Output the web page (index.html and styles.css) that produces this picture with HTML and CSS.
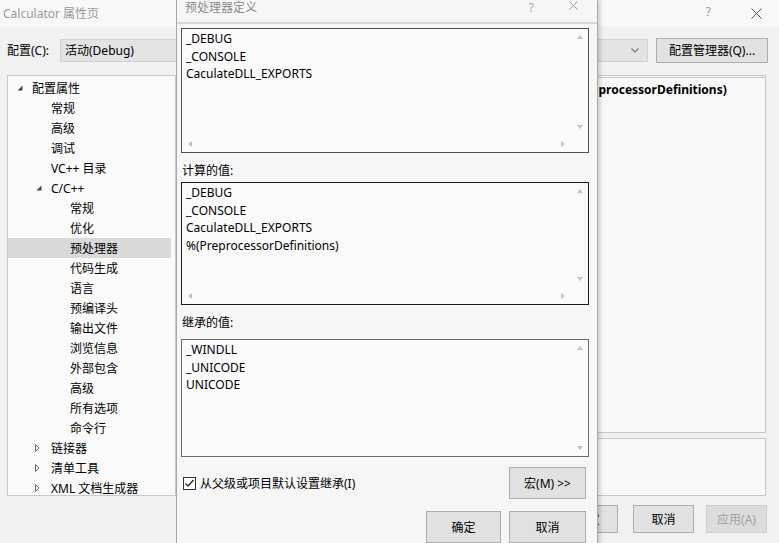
FILE: index.html
```html
<!DOCTYPE html>
<html lang="zh-CN">
<head>
<meta charset="utf-8">
<title>Calculator 属性页</title>
<link rel="stylesheet" href="styles.css">
</head>
<body>
<div class="win">
  <div class="win-title">
    <span class="win-title-text">Calculator 属性页</span>
    <span class="win-help">?</span>
    <svg class="win-close" width="11" height="11" viewBox="0 0 11 11"><path d="M0.5 0.5L10.5 10.5M10.5 0.5L0.5 10.5" stroke="#555" stroke-width="1" fill="none"/></svg>
  </div>
  <div class="cfg-row">
    <span class="cfg-label">配置(C):</span>
    <div class="combo combo-cfg"><span>活动(Debug)</span></div>
    <span class="cfg-label plat-label">平台(P):</span>
    <div class="combo combo-plat"><span>活动(Win32)</span>
      <svg class="combo-arrow" width="8" height="5" viewBox="0 0 8 5"><path d="M0.5 0.5L4 4L7.5 0.5" stroke="#777" stroke-width="1.2" fill="none"/></svg>
    </div>
    <div class="btn cfg-mgr">配置管理器(Q)...</div>
  </div>
  <div class="main">
    <div class="tree">
      <div class="node l0"><svg class="tw" width="12" height="12" viewBox="0 0 12 12"><path d="M8.5 3.5V8.5H3.5Z" fill="#444"/></svg><span>配置属性</span></div>
      <div class="node l1"><span class="tw-sp"></span><span>常规</span></div>
      <div class="node l1"><span class="tw-sp"></span><span>高级</span></div>
      <div class="node l1"><span class="tw-sp"></span><span>调试</span></div>
      <div class="node l1"><span class="tw-sp"></span><span>VC++ 目录</span></div>
      <div class="node l1"><svg class="tw" width="12" height="12" viewBox="0 0 12 12"><path d="M8.5 3.5V8.5H3.5Z" fill="#444"/></svg><span>C/C++</span></div>
      <div class="node l2"><span class="tw-sp"></span><span>常规</span></div>
      <div class="node l2"><span class="tw-sp"></span><span>优化</span></div>
      <div class="node l2 sel"><span class="tw-sp"></span><span>预处理器</span></div>
      <div class="node l2"><span class="tw-sp"></span><span>代码生成</span></div>
      <div class="node l2"><span class="tw-sp"></span><span>语言</span></div>
      <div class="node l2"><span class="tw-sp"></span><span>预编译头</span></div>
      <div class="node l2"><span class="tw-sp"></span><span>输出文件</span></div>
      <div class="node l2"><span class="tw-sp"></span><span>浏览信息</span></div>
      <div class="node l2"><span class="tw-sp"></span><span>外部包含</span></div>
      <div class="node l2"><span class="tw-sp"></span><span>高级</span></div>
      <div class="node l2"><span class="tw-sp"></span><span>所有选项</span></div>
      <div class="node l2"><span class="tw-sp"></span><span>命令行</span></div>
      <div class="node l1 c"><svg class="tw" width="12" height="12" viewBox="0 0 12 12"><path d="M4.5 2.5L8 6L4.5 9.5Z" fill="none" stroke="#666" stroke-width="1"/></svg><span>链接器</span></div>
      <div class="node l1 c"><svg class="tw" width="12" height="12" viewBox="0 0 12 12"><path d="M4.5 2.5L8 6L4.5 9.5Z" fill="none" stroke="#666" stroke-width="1"/></svg><span>清单工具</span></div>
      <div class="node l1 c"><svg class="tw" width="12" height="12" viewBox="0 0 12 12"><path d="M4.5 2.5L8 6L4.5 9.5Z" fill="none" stroke="#666" stroke-width="1"/></svg><span>XML 文档生成器</span></div>
    </div>
    <div class="props">
      <div class="grid">
        <div class="prop-row">
          <span class="prop-name">预处理器定义</span>
          <span class="prop-val">_DEBUG;_CONSOLE;CaculateDLL_EXPORTS;%(PreprocessorDefinitions)</span>
        </div>
      </div>
      <div class="desc"></div>
    </div>
  </div>
  <div class="footer">
    <div class="btn fbtn ok">确定</div>
    <div class="btn fbtn">取消</div>
    <div class="btn fbtn disabled">应用(A)</div>
  </div>
</div>

<div class="dlg">
  <div class="dlg-title">
    <span class="dlg-title-text">预处理器定义</span>
    <span class="dlg-help">?</span>
    <svg class="dlg-close" width="9" height="9" viewBox="0 0 9 9"><path d="M0.5 0.5L8.5 8.5M8.5 0.5L0.5 8.5" stroke="#999" stroke-width="1" fill="none"/></svg>
  </div>
  <div class="dlg-body">
    <div class="box box-edit hs">
      <div class="box-text">
        <div>_DEBUG</div>
        <div>_CONSOLE</div>
        <div>CaculateDLL_EXPORTS</div>
      </div>
      <div class="vbar"><i class="ar up"></i><i class="ar down"></i></div>
      <div class="hbar"><i class="ar left"></i><i class="ar right"></i></div>
      <div class="corner"></div>
    </div>
    <div class="lbl lbl-calc">计算的值:</div>
    <div class="box box-calc hs">
      <div class="box-text">
        <div>_DEBUG</div>
        <div>_CONSOLE</div>
        <div>CaculateDLL_EXPORTS</div>
        <div>%(PreprocessorDefinitions)</div>
      </div>
      <div class="vbar"><i class="ar up"></i><i class="ar down"></i></div>
      <div class="hbar"><i class="ar left"></i><i class="ar right"></i></div>
      <div class="corner"></div>
    </div>
    <div class="lbl lbl-inh">继承的值:</div>
    <div class="box box-inh">
      <div class="box-text">
        <div>_WINDLL</div>
        <div>_UNICODE</div>
        <div>UNICODE</div>
      </div>
      <div class="vbar"><i class="ar up"></i><i class="ar down"></i></div>
    </div>
    <div class="opt-row">
      <label class="chk">
        <svg class="chk-box" width="13" height="13" viewBox="0 0 13 13"><rect x="0.5" y="0.5" width="12" height="12" fill="#fff" stroke="#333"/><path d="M2.5 6.5L5 9L10.5 3" stroke="#222" stroke-width="1.3" fill="none"/></svg>
        <span>从父级或项目默认设置继承(I)</span>
      </label>
      <div class="btn dbtn">宏(M) &gt;&gt;</div>
    </div>
    <div class="act-row">
      <div class="btn dbtn">确定</div>
      <div class="btn dbtn">取消</div>
    </div>
  </div>
</div>
</body>
</html>
```

FILE: styles.css
```css
* { box-sizing: border-box; }

body {
  margin: 0;
  width: 779px;
  height: 543px;
  overflow: hidden;
  position: relative;
  background: #f1f1f1;
  font-family: "Noto Sans", "Noto Sans CJK SC", sans-serif;
  font-size: 12px;
  color: #000;
}

.win {
  display: flex;
  flex-direction: column;
  height: 543px;
}

.win-title {
  height: 26px;
  display: flex;
  align-items: center;
  padding-left: 3px;
  background: #f8f8f8;
}
.win-title-text { color: #9a9a9a; }
.win-help { margin-left: auto; color: #999; font-size: 12px; margin-right: 40px; margin-top: -4px; }
.win-close { margin-right: 17px; }

.cfg-row {
  height: 28px;
  margin-top: 10px;
  display: flex;
  align-items: center;
  padding-left: 7px;
}
.cfg-label { width: 53px; }
.plat-label { width: 60px; margin-left: 20px; }
.combo {
  height: 23px;
  background: #e3e3e3;
  border: 1px solid #d2d2d2;
  display: flex;
  align-items: center;
  padding-left: 4px;
}
.combo-cfg { width: 240px; }
.combo-plat { width: 268px; }
.combo-arrow { margin-left: auto; margin-right: 8px; }

.btn {
  display: flex;
  align-items: center;
  justify-content: center;
  background: #e1e1e1;
  border: 1px solid #adadad;
  color: #000;
}
.cfg-mgr {
  margin-left: 8px;
  width: 112px;
  height: 25px;
}

.main {
  display: flex;
  margin-top: 11px;
  height: 421px;
}

.tree {
  margin-left: 7px;
  width: 169px;
  height: 421px;
  border: 1px solid #c9c9c9;
  background: #fafafa;
  padding-top: 2px;
  overflow: hidden;
}
.node {
  height: 20px;
  display: flex;
  align-items: center;
  gap: 6px;
  white-space: nowrap;
}
.node.l0 { padding-left: 6px; }
.node.l1 { padding-left: 25px; }
.node.l1.c { padding-left: 23px; gap: 8px; }
.node.l2 { padding-left: 44px; }
.node.sel { background: #d9d9d9; margin-right: 4px; }
.tw, .tw-sp { width: 12px; height: 12px; flex: none; display: block; }

.props {
  margin-left: 4px;
  width: 586px;
  display: flex;
  flex-direction: column;
}
.grid {
  height: 358px;
  border: 1px solid #c6c6c6;
  border-top: 3px double #c6c6c6;
  background: #f8f8f8;
}
.prop-row {
  height: 20px;
  display: flex;
  align-items: center;
  white-space: nowrap;
  margin-top: 1px;
}
.prop-name { width: 133px; flex: none; padding-left: 4px; }
.prop-val { font-weight: bold; }
.desc {
  margin-top: 5px;
  flex: 1;
  border: 1px solid #c6c6c6;
  background: #f8f8f8;
}

.footer {
  display: flex;
  justify-content: flex-end;
  gap: 12px;
  padding-right: 12px;
  margin-top: 9px;
}
.fbtn { width: 61px; height: 28px; }
.fbtn.ok { margin-right: 3px; }
.fbtn.disabled { color: #a0a0a0; background: #dcdcdc; border-color: #cfcfcf; }

/* dialog window on top */
.dlg {
  position: absolute;
  left: 176px;
  top: 0;
  width: 422px;
  height: 560px;
  background: #f6f6f6;
  border-left: 1px solid #a8a8a8;
  border-right: 1px solid #a8a8a8;
  box-shadow: 3px 0 3px rgba(0, 0, 0, 0.14);
  display: flex;
  flex-direction: column;
}
.dlg-title {
  height: 24px;
  display: flex;
  align-items: flex-start;
  padding: 1px 0 0 8px;
  border-bottom: 2px solid #d9d9d9;
}
.dlg-title-text { color: #8a8a8a; line-height: 13px; }
.dlg-help { margin-left: auto; color: #aaa; line-height: 13px; margin-right: 35px; }
.dlg-close { margin-right: 19px; }

.dlg-body {
  padding: 4px 8px 0 4px;
  display: flex;
  flex-direction: column;
}

.box {
  border: 1px solid #3a3a3a;
  background: #fafafa;
  display: grid;
  grid-template-columns: 1fr 17px;
  grid-template-rows: 1fr;
}
.box.hs { grid-template-rows: 1fr 17px; }
.box-edit { height: 125px; border-color: #505050; }
.box-calc { height: 123px; border-color: #1e1e1e; }
.box-inh { height: 118px; border-color: #6a6a6a; }

.box-text {
  padding: 1px 0 0 4px;
  line-height: 17.5px;
  white-space: nowrap;
  overflow: hidden;
}
.vbar {
  display: flex;
  flex-direction: column;
  justify-content: space-between;
  align-items: center;
}
.hbar {
  display: flex;
  justify-content: space-between;
  align-items: center;
}
.vbar .ar, .hbar .ar {
  margin: 6px;
}
.ar { display: block; width: 0; height: 0; }
.ar.up { border-left: 3px solid transparent; border-right: 3px solid transparent; border-bottom: 4px solid #c2c2c2; }
.ar.down { border-left: 3px solid transparent; border-right: 3px solid transparent; border-top: 4px solid #c2c2c2; }
.ar.left { border-top: 3px solid transparent; border-bottom: 3px solid transparent; border-right: 4px solid #c2c2c2; }
.ar.right { border-top: 3px solid transparent; border-bottom: 3px solid transparent; border-left: 4px solid #c2c2c2; }

.lbl { line-height: 16px; }
.lbl-calc { margin: 10px 0 3px 1px; }
.lbl-inh { margin: 10px 0 8px 1px; }

.opt-row {
  display: flex;
  align-items: center;
  margin-top: 10px;
}
.chk {
  display: flex;
  align-items: center;
  gap: 4px;
  margin-left: 2px;
}
.chk-box { display: block; }
.dbtn { width: 77px; height: 32px; }
.opt-row .dbtn { margin-left: auto; margin-right: 3px; }

.act-row {
  display: flex;
  justify-content: flex-end;
  gap: 8px;
  margin-top: 12px;
  margin-right: 3px;
}
.act-row .dbtn:first-child { width: 75px; }
```
